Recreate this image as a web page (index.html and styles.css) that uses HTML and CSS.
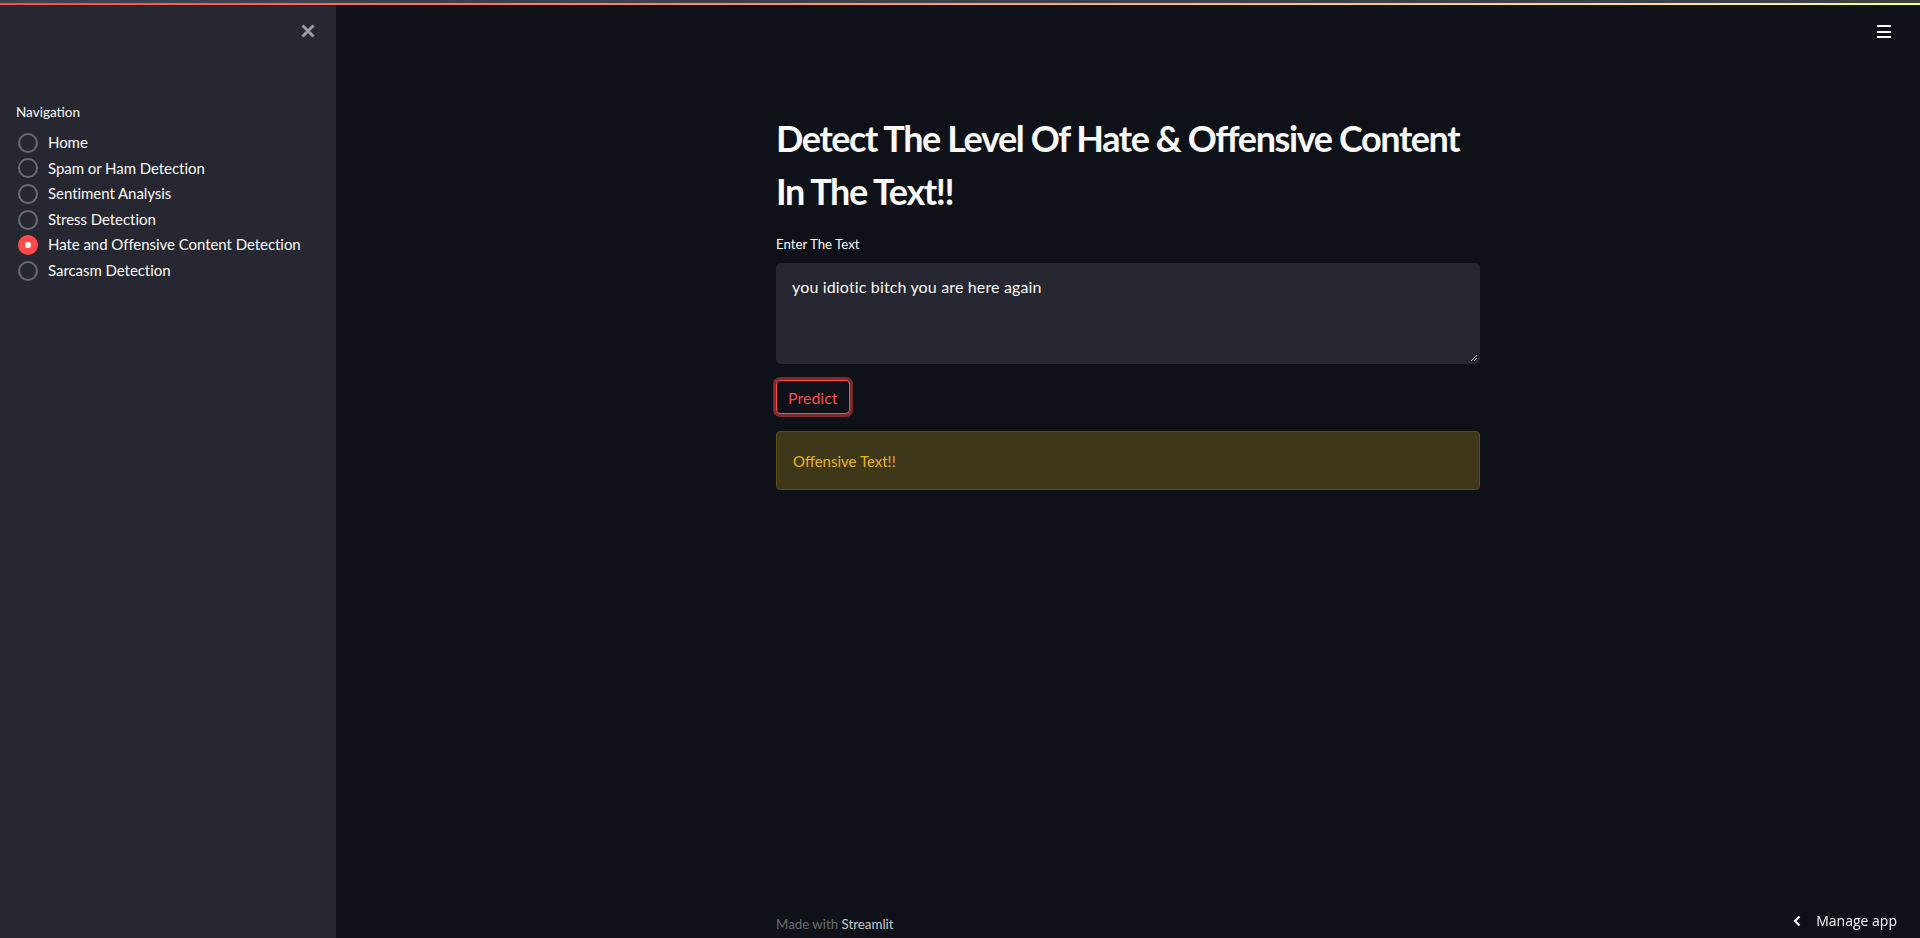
FILE: index.html
```html
<!DOCTYPE html>
<html lang="en">
<head>
<meta charset="utf-8">
<title>Hate and Offensive Content Detection</title>
<link rel="stylesheet" href="styles.css">
</head>
<body>
<div class="topstrip"><div class="strip-gray"></div><div class="strip-grad"></div></div>
<div class="app">
  <aside class="sidebar">
    <div class="side-head">
      <button class="close-btn" aria-label="Close sidebar">
        <svg width="16" height="16" viewBox="0 0 16 16"><path d="M2.5 2.5 L13.5 13.5 M13.5 2.5 L2.5 13.5" stroke="#9a9ca6" stroke-width="3" stroke-linecap="butt"/></svg>
      </button>
    </div>
    <div class="nav">
      <div class="nav-label">Navigation</div>
      <div class="radio-list">
        <label class="radio"><span class="dot"></span><span>Home</span></label>
        <label class="radio"><span class="dot"></span><span>Spam or Ham Detection</span></label>
        <label class="radio"><span class="dot"></span><span>Sentiment Analysis</span></label>
        <label class="radio"><span class="dot"></span><span>Stress Detection</span></label>
        <label class="radio"><span class="dot on"></span><span>Hate and Offensive Content Detection</span></label>
        <label class="radio"><span class="dot"></span><span>Sarcasm Detection</span></label>
      </div>
    </div>
  </aside>
  <main class="main">
    <header class="main-head">
      <button class="menu-btn" aria-label="Menu"><span></span><span></span><span></span></button>
    </header>
    <section class="block">
      <h1 class="title">Detect The Level Of Hate &amp; Offensive Content In The Text!!</h1>
      <div class="field-label">Enter The Text</div>
      <div class="textarea"><span>you idiotic bitch you are here again</span>
        <svg class="grip" width="8" height="8" viewBox="0 0 8 8"><path d="M7 1 L1 7 M7 4 L4 7" stroke="#c9c9c9" stroke-width="1"/></svg>
      </div>
      <button class="predict">Predict</button>
      <div class="alert">Offensive Text!!</div>
    </section>
    <footer class="footer">Made with <span class="brand">Streamlit</span></footer>
  </main>
</div>
<div class="manage"><svg width="10" height="12" viewBox="0 0 10 12"><path d="M7.5 1.5 L3 6 L7.5 10.5" stroke="#fafafa" stroke-width="2.2" fill="none"/></svg><span>Manage app</span></div>
</body>
</html>
```

FILE: styles.css
```css
* { box-sizing: border-box; }
html, body { margin: 0; padding: 0; height: 100%; }
body {
  background: #0e1117;
  color: #fafafa;
  font-family: "Source Sans Pro", Lato, "Noto Sans", sans-serif;
  overflow: hidden;
}
.topstrip {
  position: fixed;
  top: 0; left: 0; right: 0;
  z-index: 10;
}
.strip-gray { height: 3px; background: #3c3f4c; }
.strip-grad { height: 2px; background: linear-gradient(90deg, #ff4b4b, #fffd80); }

.app { display: flex; height: 100vh; }

.sidebar {
  width: 336px;
  flex: 0 0 336px;
  background: #262730;
  display: flex;
  flex-direction: column;
}
.side-head {
  height: 102px;
  display: flex;
  justify-content: flex-end;
  align-items: flex-start;
  padding: 23px 20px 0 0;
}
.close-btn {
  background: none; border: 0; padding: 0; width: 16px; height: 16px;
  display: flex;
}
.nav { padding: 0 16px; }
.nav-label {
  font-size: 13.5px;
  line-height: 20px;
  color: #fafafa;
  margin-bottom: 8px;
}
.radio-list { display: flex; flex-direction: column; }
.radio {
  display: flex;
  align-items: center;
  gap: 10px;
  font-size: 15px;
  line-height: 25.6px;
  height: 25.6px;
  letter-spacing: -0.05px;
}
.dot {
  width: 20px; height: 20px;
  margin-left: 2px;
  border-radius: 50%;
  border: 2px solid #6a6c75;
  flex: 0 0 20px;
  display: flex;
  align-items: center;
  justify-content: center;
}
.dot.on { background: #ff4b4b; border-color: #ff4b4b; }
.dot.on::after {
  content: "";
  width: 6px; height: 6px; border-radius: 50%; background: #fff;
}

.main {
  flex: 1;
  display: flex;
  flex-direction: column;
  align-items: center;
  min-width: 0;
}
.main-head {
  align-self: stretch;
  height: 60px;
  display: flex;
  justify-content: flex-end;
  padding: 25px 29px 0 0;
}
.menu-btn {
  background: none; border: 0; padding: 0;
  width: 14px; height: 13px;
  display: flex; flex-direction: column; justify-content: space-between;
}
.menu-btn span { display: block; height: 2px; background: #fafafa; }

.block {
  width: 704px;
  padding-top: 36px;
}
.title {
  margin: 0;
  padding: 16px 0 0;
  font-size: 36px;
  line-height: 52.8px;
  font-weight: 700;
  letter-spacing: -1.4px;
  height: 138px;
}
.field-label {
  font-size: 13.25px;
  line-height: 20px;
  margin-bottom: 9px;
}
.textarea {
  position: relative;
  height: 101px;
  background: #262730;
  border-radius: 5px;
  padding: 12px 16px;
  font-size: 16px;
  line-height: 24px;
  letter-spacing: 0.15px;
}
.grip { position: absolute; right: 2px; bottom: 2px; }
.predict {
  display: block;
  margin-top: 16px;
  height: 34px;
  padding: 0 11px;
  background: #0e1117;
  color: #ff4b4b;
  border: 1px solid #ff4b4b;
  border-radius: 4px;
  box-shadow: 0 0 0 3px rgba(255, 75, 75, 0.45);
  font-family: inherit;
  font-size: 16px;
}
.alert {
  margin-top: 17px;
  height: 59px;
  background: #3e3719;
  border: 1px solid #5a4d1c;
  border-radius: 4px;
  padding: 0 16px;
  display: flex;
  align-items: center;
  color: #e8b523;
  font-size: 15px;
}
.footer {
  margin-top: auto;
  width: 704px;
  padding-bottom: 4px;
  font-size: 13.3px;
  line-height: 20px;
  color: rgba(250, 250, 250, 0.4);
}
.brand { color: #c9cacd; }
.manage {
  position: fixed;
  right: 23px;
  bottom: 8px;
  display: flex;
  align-items: center;
  gap: 14px;
  font-family: "Open Sans", "Noto Sans", sans-serif;
  font-size: 14px;
  color: #fafafa;
}
```
